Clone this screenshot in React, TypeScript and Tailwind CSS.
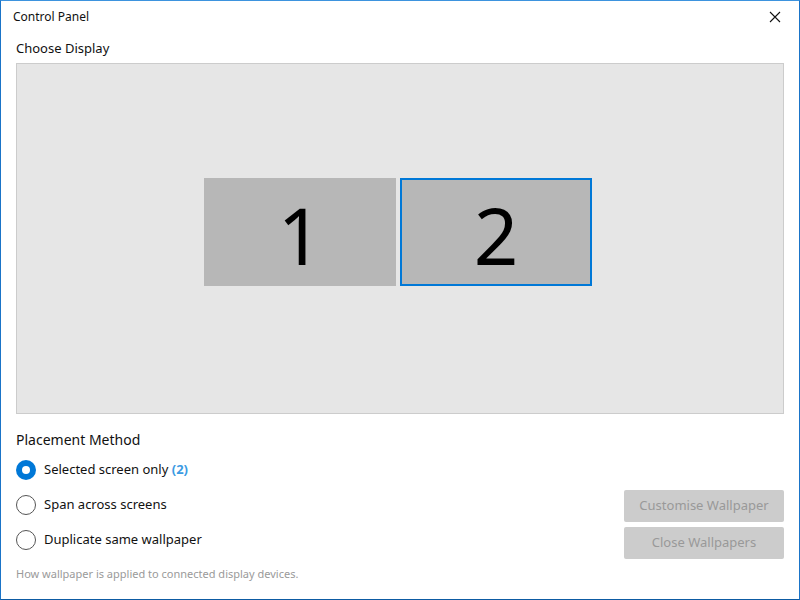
import { useState } from "react";

type Monitor = { id: number };

const monitors: Monitor[] = [{ id: 1 }, { id: 2 }];

const methods = [
  { key: "selected", label: "Selected screen only" },
  { key: "span", label: "Span across screens" },
  { key: "duplicate", label: "Duplicate same wallpaper" },
];

function CloseIcon() {
  return (
    <svg width="12" height="12" viewBox="0 0 12 12" className="block">
      <path d="M1 1L11 11M11 1L1 11" stroke="#111" strokeWidth="1.1" fill="none" />
    </svg>
  );
}

function Radio({ checked }: { checked: boolean }) {
  if (checked) {
    return (
      <span className="flex h-[20px] w-[20px] items-center justify-center rounded-full bg-[#0078d7]">
        <span className="h-[8px] w-[8px] rounded-full bg-white" />
      </span>
    );
  }
  return <span className="block h-[20px] w-[20px] rounded-full border-[1.5px] border-[#555]" />;
}

export default function App() {
  const [active, setActive] = useState(2);
  const [method, setMethod] = useState("selected");

  return (
    <div
      className="flex h-[600px] w-[800px] flex-col border border-[#1a74c8] border-b-[#0d5ba3] border-t-[#3d93de] bg-white text-[#111]"
      style={{ fontFamily: '"Noto Sans", "Open Sans", sans-serif' }}
    >
      {/* Title bar */}
      <div className="flex h-[32px] shrink-0 items-center justify-between pl-[12px] pr-[18px]">
        <span className="text-[12px]">Control Panel</span>
        <CloseIcon />
      </div>

      <div className="flex flex-1 flex-col px-[15px]">
        <div className="mt-[5px] text-[13px] leading-[20px]">Choose Display</div>

        {/* Display arrangement */}
        <div className="mt-[5px] flex h-[351px] items-center justify-center gap-[4px] border border-[#cccccc] bg-[#e6e6e6] pb-[14px] pr-[4px]">
          {monitors.map((m) => (
            <button
              key={m.id}
              onClick={() => setActive(m.id)}
              className={
                "flex h-[108px] w-[192px] items-center justify-center bg-[#b7b7b7] pt-[6px] text-[78px] font-normal leading-none text-black " +
                (active === m.id ? "border-2 border-[#0078d7]" : "")
              }
            >
              {m.id}
            </button>
          ))}
        </div>

        {/* Placement */}
        <div className="mt-[16px] flex items-start justify-between">
          <div className="flex flex-col">
            <div className="text-[14px] leading-[20px]">Placement Method</div>
            <div className="mt-[2px] flex flex-col">
              {methods.map((m) => (
                <label
                  key={m.key}
                  onClick={() => setMethod(m.key)}
                  className="flex h-[35px] cursor-pointer items-center gap-[8px] text-[13px]"
                >
                  <Radio checked={method === m.key} />
                  <span>
                    {m.label}
                    {m.key === "selected" && (
                      <span className="font-bold text-[#3b9be3]"> ({active})</span>
                    )}
                  </span>
                </label>
              ))}
            </div>
            <div className="mt-[9px] text-[11px] leading-[16px] text-[#9a9a9a]">
              How wallpaper is applied to connected display devices.
            </div>
          </div>

          <div className="mt-[60px] flex flex-col gap-[5px]">
            <button className="h-[32px] w-[160px] rounded-[2px] bg-[#cccccc] text-[13px] text-[#999]">
              Customise Wallpaper
            </button>
            <button className="h-[32px] w-[160px] rounded-[2px] bg-[#cccccc] text-[13px] text-[#999]">
              Close Wallpapers
            </button>
          </div>
        </div>
      </div>
    </div>
  );
}
